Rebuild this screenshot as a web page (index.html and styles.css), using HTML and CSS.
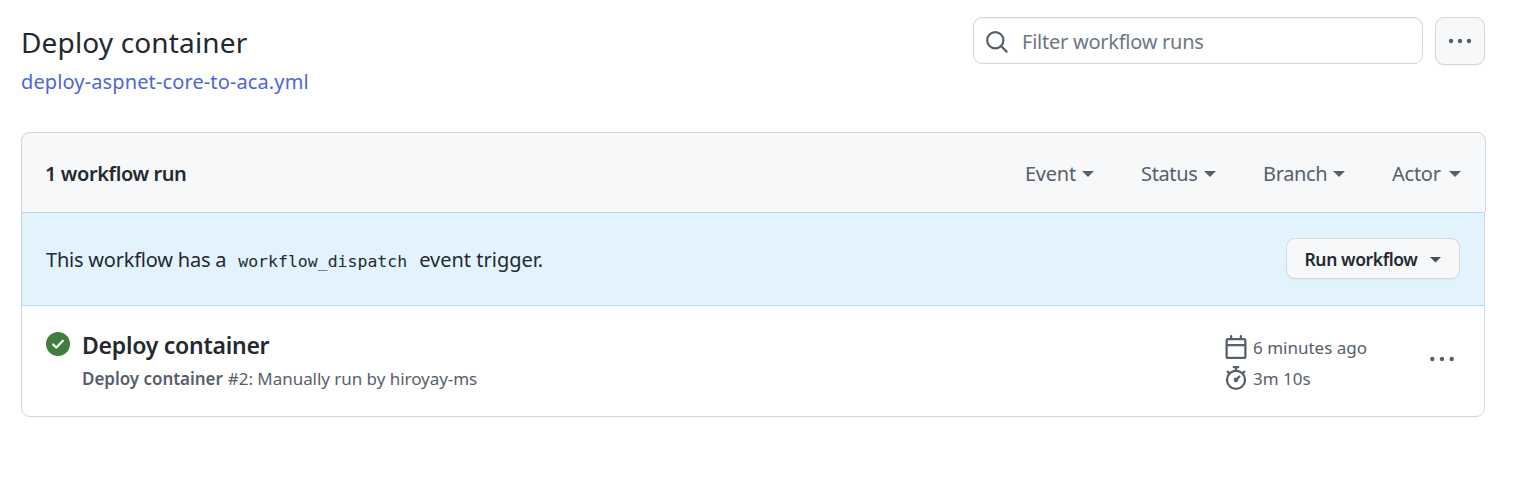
FILE: index.html
```html
<!DOCTYPE html>
<html lang="en">
<head>
<meta charset="utf-8">
<title>Deploy container</title>
<link rel="stylesheet" href="styles.css">
</head>
<body>
<header class="page-head">
  <div class="heading">
    <h1 class="title"><span>Deploy container</span></h1>
    <a class="file-link"><span>deploy-aspnet-core-to-aca.yml</span></a>
  </div>
  <div class="tools">
    <div class="search">
      <svg width="24" height="24" viewBox="0 0 24 24" fill="none" stroke="#57606a" stroke-width="2.2"><circle cx="10.3" cy="10.3" r="8.1"/><path d="M16 16l5.6 5.6" stroke-linecap="round"/></svg>
      <span class="placeholder">Filter workflow runs</span>
    </div>
    <button class="more" aria-label="More"><svg width="26" height="6" viewBox="0 0 26 6" fill="#57606a"><circle cx="4" cy="3" r="2.2"/><circle cx="13" cy="3" r="2.2"/><circle cx="22" cy="3" r="2.2"/></svg></button>
  </div>
</header>
<main class="card">
  <div class="card-head">
    <strong class="count">1 workflow run</strong>
    <nav class="filters">
      <span class="filter event"><span>Event</span><i class="caret"></i></span>
      <span class="filter status"><span>Status</span><i class="caret"></i></span>
      <span class="filter branch"><span>Branch</span><i class="caret"></i></span>
      <span class="filter actor"><span>Actor</span><i class="caret"></i></span>
    </nav>
  </div>
  <div class="notice">
    <div class="notice-text"><span class="lead">This workflow has a</span><code>workflow_dispatch</code><span class="tail">event trigger.</span></div>
    <button class="run"><span>Run workflow</span><i class="caret"></i></button>
  </div>
  <div class="row">
    <svg class="check" width="24" height="24" viewBox="0 0 24 24"><circle cx="12" cy="12" r="12" fill="#3f7f3b"/><path d="M7.2 12.5l3.2 3.1 6.4-6.9" fill="none" stroke="#fff" stroke-width="2.2" stroke-linecap="round" stroke-linejoin="round"/></svg>
    <div class="run-info">
      <div class="run-title"><span>Deploy container</span></div>
      <div class="run-sub"><b>Deploy container</b><span>#2: Manually run by hiroyay-ms</span></div>
    </div>
    <div class="meta">
      <div class="meta-line"><svg width="24" height="24" viewBox="0 0 16 16" fill="#57606a"><path fill-rule="evenodd" d="M4.75 0a.75.75 0 01.75.75V2h5V.75a.75.75 0 011.5 0V2h1.25c.966 0 1.75.784 1.75 1.75v10.5A1.75 1.75 0 0113.25 16H2.75A1.75 1.75 0 011 14.250V3.75C1 2.784 1.784 2 2.75 2H4V.75A.75.75 0 014.75 0zm0 3.500h-2a.25.25 0 00-.25.25V6h11V3.750a.25.25 0 00-.25-.25h-8.500zm-2.250 4v6.750c0 .138.112.25.25.25h10.500a.25.25 0 00.25-.25V7.500h-11z"/></svg><span class="ago">6 minutes ago</span></div>
      <div class="meta-line"><svg width="24" height="24" viewBox="0 0 16 16" fill="#57606a"><path fill-rule="evenodd" d="M5.750.75A.75.75 0 016.500 0h3a.75.75 0 010 1.500h-.75v1l-.001.041a6.718 6.718 0 013.464 1.435l.007-.006.750-.750a.75.75 0 111.060 1.060l-.750.750-.006.007a6.750 6.750 0 11-10.548 0L2.720 5.030l-.750-.750a.75.75 0 011.060-1.060l.750.750.007.006A6.718 6.718 0 017.250 2.541V1.500H6.500a.75.75 0 01-.75-.75zM8 14.500A5.250 5.250 0 108 4a5.250 5.250 0 000 10.500zm.389-6.700l1.330-1.330a.75.75 0 111.061 1.060L9.450 8.861A1.502 1.502 0 018 10.750a1.500 1.500 0 11.389-2.950z"/></svg><span class="dur">3m 10s</span></div>
    </div>
    <svg class="dots" width="26" height="6" viewBox="0 0 26 6" fill="#57606a"><circle cx="3.300" cy="3" r="2.200"/><circle cx="13" cy="3" r="2.200"/><circle cx="22.700" cy="3" r="2.200"/></svg>
  </div>
</main>
</body>
</html>
```
FILE: styles.css
```css
* { box-sizing: border-box; }
body { margin: 0; padding: 17px 33px 0 21px; height: 502px; background: #fff; color: #24292f; font-family: "Noto Sans", "Open Sans", sans-serif; font-size: 20px; white-space: nowrap; }
.page-head { display: flex; justify-content: space-between; align-items: flex-start; height: 115px; }
.title { margin: 6px 0 0; font-size: 28px; line-height: 38px; font-weight: 400; letter-spacing: .15px; }
.file-link { display: block; margin-top: 7px; line-height: 28px; color: #4d66d6; letter-spacing: .12px; }
.tools { display: flex; gap: 12px; }
.search { display: flex; align-items: center; width: 450px; height: 47px; padding: 2px 0 0 11px; border: 1px solid #d0d7de; border-radius: 9px; color: #6e7781; box-shadow: inset 0 1px 1px #eef1f5; }
.placeholder { margin-left: 13px; line-height: 28px; letter-spacing: -.25px; }
button { font: inherit; color: inherit; border: 1px solid #d5d8da; background: #f6f8fa; border-radius: 9px; box-shadow: 0 1px 1px #1b1f240c; padding: 0; display: flex; align-items: center; justify-content: center; }
.more { width: 50px; height: 48px; padding-bottom: 1px; }
.card { width: 1464px; height: 285px; border: 1px solid #d0d7de; border-radius: 9px; display: flex; flex-direction: column; }
.card-head { flex: none; width: 1465px; height: 80px; margin: -1px 0 0 -1px; padding: 1px 24px 0 23px; border: 1px solid #d0d7de; border-bottom: 0; border-radius: 9px 9px 0 0; background: #f6f8fa; display: flex; justify-content: space-between; align-items: center; }
.count { font-weight: 600; letter-spacing: -.4px; }
.filters { display: flex; gap: 47px; color: #57606a; letter-spacing: -.25px; }
.filter { display: flex; align-items: center; justify-content: space-between; }
.event { width: 69px; }
.status { width: 75px; letter-spacing: -.35px; }
.branch { width: 82px; letter-spacing: -.35px; }
.actor { width: 69px; }
.caret { width: 12px; height: 6px; margin-top: 2px; background: currentColor; clip-path: polygon(0 0, 100% 0, 50% 100%); }
.notice { flex: none; height: 94px; padding: 0 24px; background: #e2f3fe; border-top: 1px solid #aed7fb; border-bottom: 1px solid #b2d8f8; display: flex; justify-content: space-between; align-items: center; }
.notice-text { display: flex; align-items: baseline; }
.lead { letter-spacing: -.22px; }
code { font-family: "DejaVu Sans Mono", monospace; font-size: 16.5px; margin: 0 12px; }
.run { width: 174px; height: 41px; margin-bottom: 1px; font-size: 17.5px; font-weight: 600; letter-spacing: -.4px; }
.run .caret { margin-left: 12px; color: #4b5055; }
.row { display: flex; align-items: flex-start; height: 110px; padding: 26px 24px 0; }
.run-info { margin-left: 12px; flex: 1; }
.run-title { margin-top: -1px; font-size: 23px; line-height: 28px; font-weight: 600; letter-spacing: -.25px; }
.run-sub { display: flex; gap: 5px; margin-top: 8px; font-size: 17px; line-height: 24px; color: #57606a; letter-spacing: -.04px; }
.run-sub b { font-weight: 600; }
.meta { width: 205px; margin: 3px 1px 0 0; font-size: 17px; color: #57606a; display: grid; gap: 7px; }
.meta-line { display: flex; align-items: center; gap: 5px; height: 24px; }
.dots { margin: 24px 5px 0 -1px; }
```
